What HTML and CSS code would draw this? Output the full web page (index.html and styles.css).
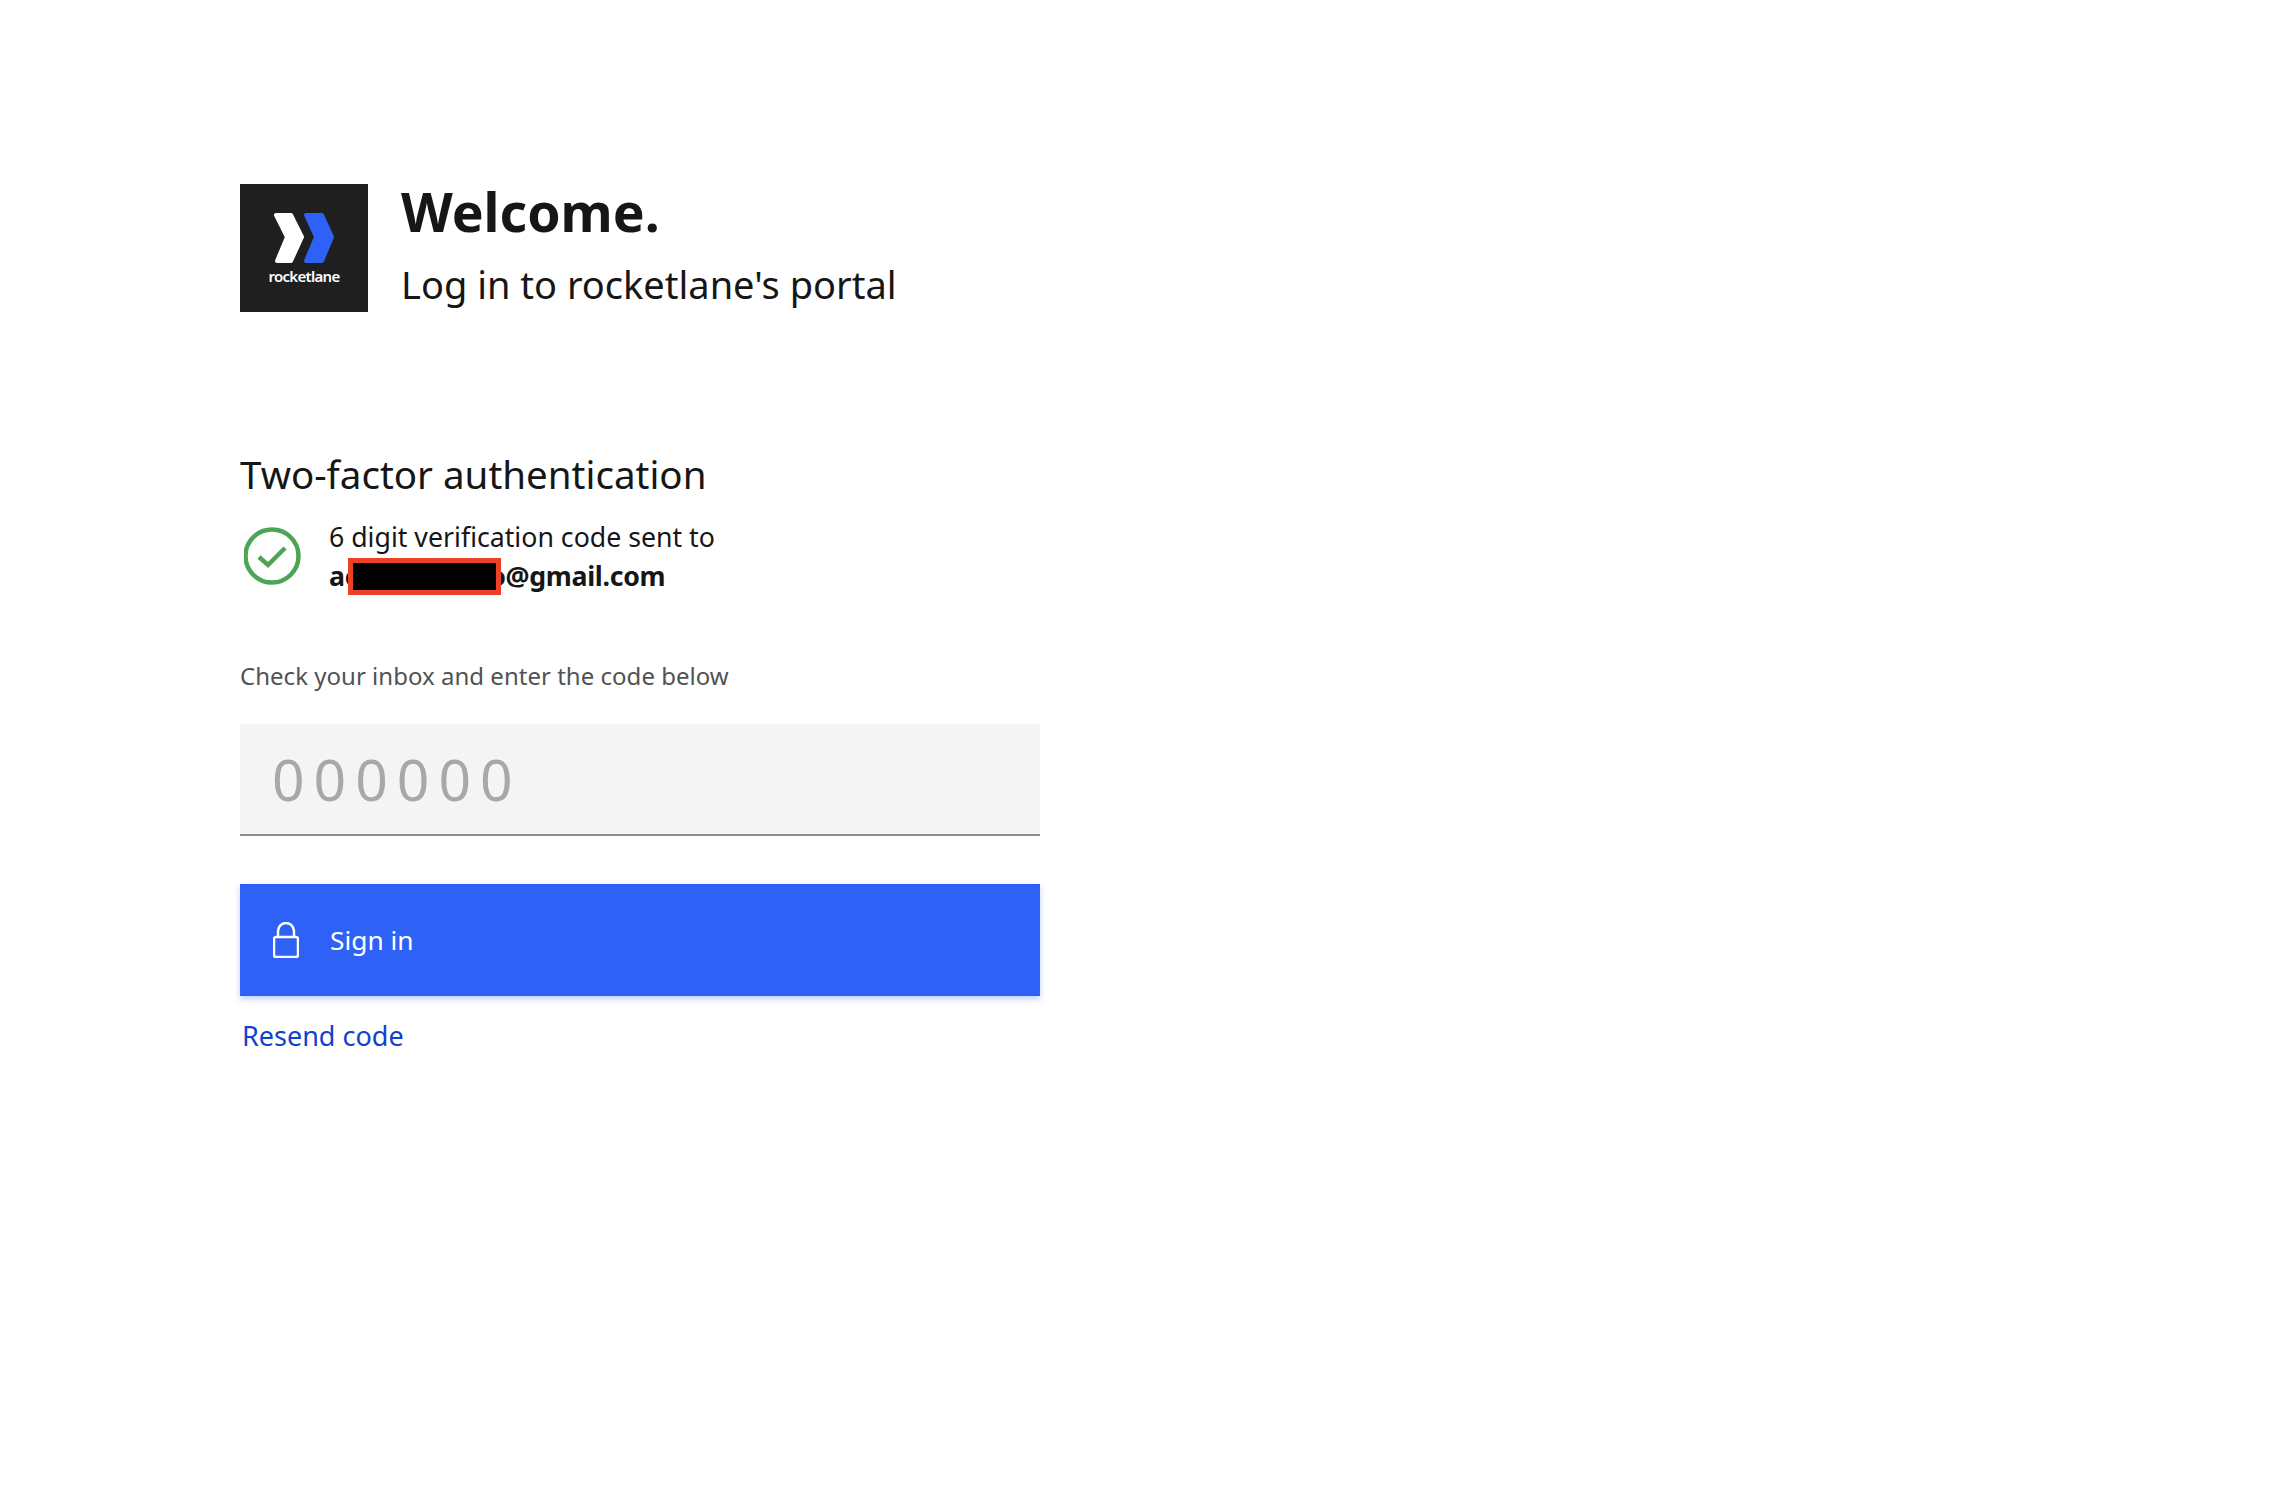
FILE: index.html
```html
<!DOCTYPE html>
<html lang="en">
<head>
    <meta charset="UTF-8">
    <meta name="viewport" content="width=device-width, initial-scale=1.0">
    <title>Two-factor authentication</title>
    <link rel="stylesheet" href="styles.css">
</head>
<body>
    <div class="container">
        <div class="header">
            <div class="logo">
                <svg class="logo-mark" width="62" height="52" viewBox="0 0 62 52">
                    <path class="logo-white" d="M3 3 H18 L29 25 L18 49 H4 L14 25 Z"/>
                    <path class="logo-blue" d="M33 3 H49 L59 25 L49 49 H33 L43 25 Z"/>
                </svg>
                <span class="logo-name">rocketlane</span>
            </div>
            <div class="header-text">
                <h1>Welcome.</h1>
                <p>Log in to rocketlane's portal</p>
            </div>
        </div>

        <h2>Two-factor authentication</h2>

        <div class="notice">
            <svg class="notice-icon" width="58" height="58" viewBox="0 0 58 58">
                <circle cx="28" cy="29" r="26.5"/>
                <path d="M15 30 L24 38 L41 21"/>
            </svg>
            <div class="notice-text">
                <div>6 digit verification code sent to</div>
                <div class="email">ac<span class="redact"></span>o@gmail.com</div>
            </div>
        </div>

        <form class="form" action="#">
            <label for="code">Check your inbox and enter the code below</label>
            <input class="form-control" id="code" type="text" placeholder="000000">
            <button class="btn" type="button">
                <svg width="26" height="36" viewBox="0 0 26 36">
                    <rect x="1" y="15" width="24" height="20" rx="2"/>
                    <path d="M5 15 V9 a8 8 0 0 1 16 0 V15"/>
                </svg>
                <span>Sign in</span>
            </button>
            <a class="resend" href="#">Resend code</a>
        </form>
    </div>
</body>
</html>
```

FILE: styles.css
```css
html, body {
    margin: 0;
    padding: 0;
    background-color: #fff;
    color: #161616;
    font-family: "Noto Sans", "Open Sans", sans-serif;
}

.container {
    width: 800px;
    padding: 184px 0 0 240px;
}

.header {
    display: flex;
    gap: 33px;
    height: 128px;
}

.logo {
    width: 128px;
    height: 128px;
    background-color: #1f1f1f;
    display: flex;
    flex-direction: column;
    align-items: center;
    padding-top: 28px;
    box-sizing: border-box;
}

.logo-white {
    fill: #fff;
    stroke: #fff;
    stroke-width: 4;
    stroke-linejoin: round;
}

.logo-blue {
    fill: #2e62f6;
    stroke: #2e62f6;
    stroke-width: 4;
    stroke-linejoin: round;
}

.logo-name {
    color: #fff;
    font-size: 15px;
    font-weight: 600;
    line-height: 20px;
    margin-top: 2px;
    letter-spacing: -0.7px;
}

.header-text h1 {
    margin: 0;
    font-size: 53.5px;
    line-height: 56px;
    font-weight: 700;
}

.header-text p {
    margin: 19px 0 0;
    font-size: 38px;
    line-height: 50px;
}

h2 {
    margin: 137px 0 0;
    font-size: 38.5px;
    font-weight: 400;
    line-height: 50px;
}

.notice {
    display: flex;
    align-items: center;
    gap: 27px;
    margin-top: 18px;
    padding-left: 4px;
}

.notice-icon {
    flex-shrink: 0;
    fill: none;
    stroke: #4ca454;
    stroke-width: 4.5;
}

.notice-text {
    font-size: 26.7px;
    line-height: 39px;
}

.email {
    font-weight: 700;
    letter-spacing: -0.3px;
}

.redact {
    position: relative;
    z-index: 1;
    display: inline-block;
    box-sizing: border-box;
    width: 153px;
    height: 37px;
    margin: 0 -12px 0 -10px;
    vertical-align: -9px;
    background-color: #000;
    border: 5px solid #ee4024;
}

.form {
    margin-top: 64px;
}

.form label {
    display: block;
    font-size: 24px;
    line-height: 34px;
    color: #525252;
    letter-spacing: 0.02px;
}

.form-control {
    display: block;
    box-sizing: border-box;
    width: 800px;
    height: 112px;
    margin-top: 31px;
    padding: 0 32px;
    border: none;
    border-bottom: 2px solid #8d8d8d;
    border-radius: 0;
    outline: none;
    background-color: #f4f4f4;
    font-family: inherit;
    font-size: 57px;
    letter-spacing: 9px;
    color: #161616;
}

.form-control::placeholder {
    color: #a8a8a8;
    opacity: 1;
}

.btn {
    display: flex;
    align-items: center;
    gap: 31px;
    width: 800px;
    height: 112px;
    margin-top: 48px;
    padding: 0 33px;
    border: none;
    background-color: #2e62f6;
    color: #fff;
    font-family: inherit;
    font-size: 26.3px;
    box-shadow: 0 3px 6px rgba(46, 98, 246, 0.3);
}

.btn svg {
    fill: none;
    stroke: #fff;
    stroke-width: 2.5;
    flex-shrink: 0;
}

.resend {
    display: inline-block;
    margin: 21px 0 0 2px;
    font-size: 27px;
    line-height: 38px;
    color: #0f43cf;
    text-decoration: none;
}
```
